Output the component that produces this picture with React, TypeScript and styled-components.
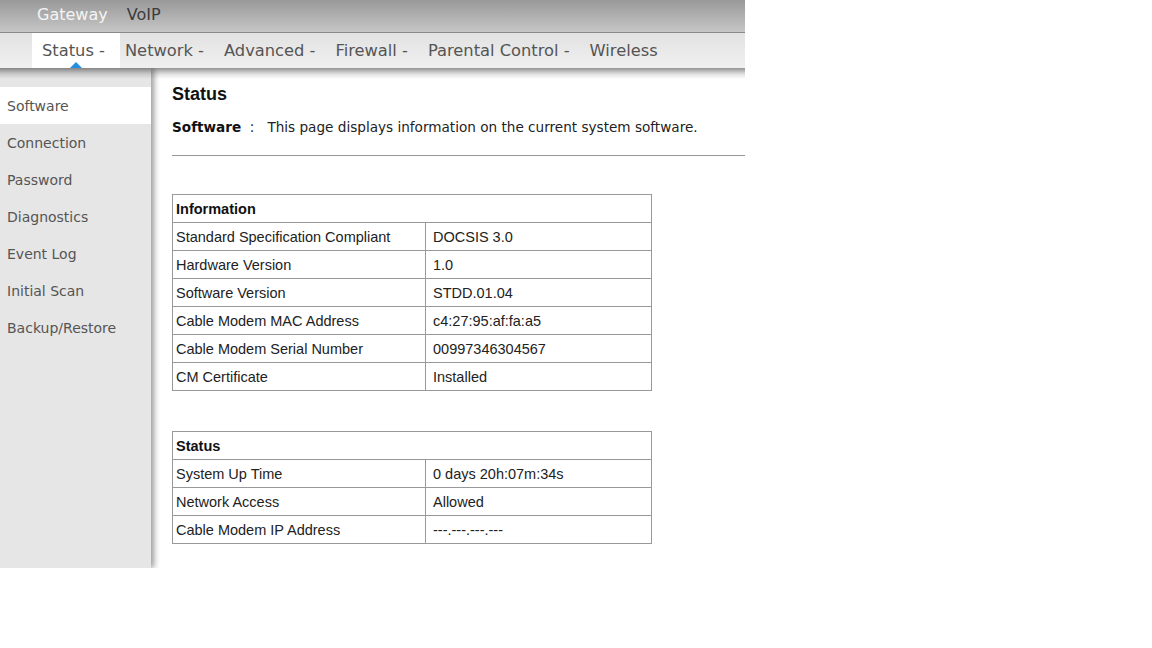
import styled, { createGlobalStyle } from 'styled-components';

const GlobalStyle = createGlobalStyle`
  html, body {
    margin: 0;
    padding: 0;
    background: #fff;
  }
`;

const Page = styled.div`
  width: 745px;
  height: 568px;
  display: flex;
  flex-direction: column;
  font-family: 'DejaVu Sans', Verdana, sans-serif;
`;

const Header = styled.header`
  position: relative;
  z-index: 2;

  &::after {
    content: '';
    position: absolute;
    left: 0;
    right: 0;
    top: 100%;
    height: 11px;
    background: linear-gradient(rgba(0, 0, 0, 0.42), rgba(0, 0, 0, 0.12) 55%, rgba(0, 0, 0, 0));
    pointer-events: none;
  }
`;

const TopBar = styled.div`
  height: 32px;
  display: flex;
  align-items: center;
  gap: 19px;
  padding-left: 37px;
  background: linear-gradient(#999 0%, #b4b4b4 60%, #c6c6c6 100%);
  border-bottom: 1px solid #8a8a8a;
`;

const TopItem = styled.span<{ $active?: boolean }>`
  font-size: 16px;
  color: ${({ $active }) => ($active ? '#f4f4f4' : '#3c3c3c')};
  margin-top: -4px;
`;

const NavBar = styled.nav`
  height: 35px;
  display: flex;
  align-items: stretch;
  padding-left: 32px;
  background: linear-gradient(#e2e2e2, #f0f0f0);
`;

const NavItem = styled.div<{ $active?: boolean }>`
  position: relative;
  display: flex;
  align-items: center;
  padding: 0 15px 0 ${({ $active }) => ($active ? '10px' : '5px')};
  font-size: 16.3px;
  color: #555;
  background: ${({ $active }) => ($active ? '#fff' : 'transparent')};
  white-space: nowrap;
`;

const Pointer = styled.span`
  position: absolute;
  left: 38px;
  bottom: 0;
  width: 0;
  height: 0;
  border-left: 6px solid transparent;
  border-right: 6px solid transparent;
  border-bottom: 6px solid #2590e0;
`;

const Body = styled.div`
  flex: 1;
  display: flex;
  min-height: 0;
`;

const Sidebar = styled.aside`
  position: relative;
  z-index: 1;
  width: 151px;
  flex-shrink: 0;
  padding-top: 19px;
  background: #e6e6e6;
  box-shadow: 3px 0 6px rgba(0, 0, 0, 0.4);
`;

const SideItem = styled.div<{ $active?: boolean }>`
  height: 37px;
  display: flex;
  align-items: center;
  padding-left: 7px;
  font-size: 14px;
  color: #555;
  background: ${({ $active }) => ($active ? '#fff' : 'transparent')};
`;

const Main = styled.main`
  flex: 1;
  padding: 16px 0 0 21px;
`;

const Title = styled.h2`
  margin: 0;
  font-family: 'Liberation Sans', Arial, sans-serif;
  font-weight: 700;
  font-size: 18px;
  line-height: 20px;
  color: #111;
`;

const Description = styled.p`
  margin: 14px 0 0;
  font-size: 13.6px;
  line-height: 18px;
  color: #222;
  white-space: nowrap;

  b {
    color: #111;
  }
`;

const Divider = styled.hr`
  margin: 19px 0 0;
  border: 0;
  border-top: 1px solid #999;
`;

const Table = styled.table<{ $first?: boolean }>`
  width: 480px;
  border-collapse: collapse;
  margin-top: ${({ $first }) => ($first ? '38px' : '40px')};
  font-family: 'Liberation Sans', Arial, sans-serif;
  font-size: 14.5px;
  color: #222;

  th,
  td {
    height: 27px;
    padding: 0 3px;
    border: 1px solid #999;
    text-align: left;
  }

  th {
    font-weight: 700;
    color: #111;
  }

  td:first-child {
    width: 246px;
  }

  td + td {
    padding-left: 7px;
  }
`;

const topItems = [
  { label: 'Gateway', active: true },
  { label: 'VoIP' },
];

const navItems = [
  'Status -',
  'Network -',
  'Advanced -',
  'Firewall -',
  'Parental Control -',
  'Wireless',
];

const sideItems = [
  'Software',
  'Connection',
  'Password',
  'Diagnostics',
  'Event Log',
  'Initial Scan',
  'Backup/Restore',
];

const information = [
  ['Standard Specification Compliant', 'DOCSIS 3.0'],
  ['Hardware Version', '1.0'],
  ['Software Version', 'STDD.01.04'],
  ['Cable Modem MAC Address', 'c4:27:95:af:fa:a5'],
  ['Cable Modem Serial Number', '00997346304567'],
  ['CM Certificate', 'Installed'],
];

const status = [
  ['System Up Time', '0 days 20h:07m:34s'],
  ['Network Access', 'Allowed'],
  ['Cable Modem IP Address', '---.---.---.---'],
];

const InfoTable = ({
  title,
  rows,
  first,
}: {
  title: string;
  rows: string[][];
  first?: boolean;
}) => (
  <Table $first={first}>
    <thead>
      <tr>
        <th colSpan={2}>{title}</th>
      </tr>
    </thead>
    <tbody>
      {rows.map(([k, v]) => (
        <tr key={k}>
          <td>{k}</td>
          <td>{v}</td>
        </tr>
      ))}
    </tbody>
  </Table>
);

export default function App() {
  return (
    <>
      <GlobalStyle />
      <Page>
        <Header>
          <TopBar>
            {topItems.map((t) => (
              <TopItem key={t.label} $active={t.active}>
                {t.label}
              </TopItem>
            ))}
          </TopBar>
          <NavBar>
            {navItems.map((n, i) => (
              <NavItem key={n} $active={i === 0}>
                {n}
                {i === 0 && <Pointer />}
              </NavItem>
            ))}
          </NavBar>
        </Header>
        <Body>
          <Sidebar>
            {sideItems.map((s, i) => (
              <SideItem key={s} $active={i === 0}>
                {s}
              </SideItem>
            ))}
          </Sidebar>
          <Main>
            <Title>Status</Title>
            <Description>
              <b>Software</b>&nbsp;&nbsp;:&nbsp;&nbsp;&nbsp;This page displays information on
              the current system software.
            </Description>
            <Divider />
            <InfoTable title="Information" rows={information} first />
            <InfoTable title="Status" rows={status} />
          </Main>
        </Body>
      </Page>
    </>
  );
}
